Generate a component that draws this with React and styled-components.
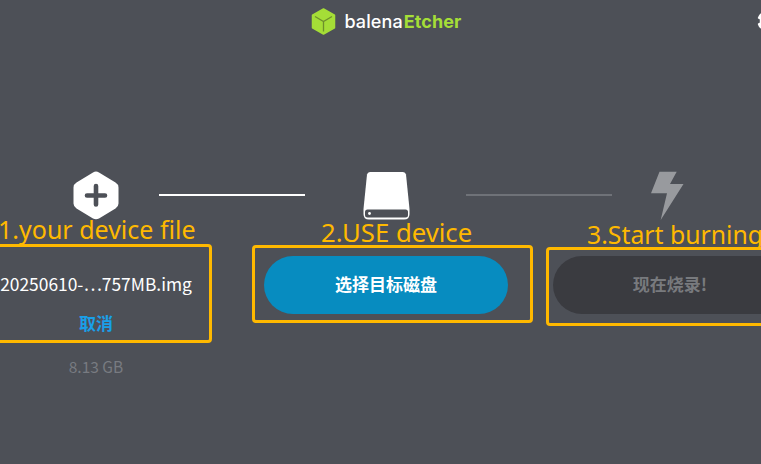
import React from "react";
import styled, { createGlobalStyle } from "styled-components";
import { FaCog } from "react-icons/fa";

const GlobalStyle = createGlobalStyle`
  html, body {
    margin: 0;
    padding: 0;
    background: #4d5057;
    overflow: hidden;
  }
`;

const Page = styled.div`
  position: relative;
  width: 761px;
  height: 464px;
  overflow: hidden;
  background: #4d5057;
  font-family: "Noto Sans CJK SC", "Noto Sans", sans-serif;
`;

const Header = styled.header`
  display: flex;
  justify-content: center;
  align-items: center;
  gap: 8px;
  height: 42px;
  padding-left: 12px;
`;

const BrandText = styled.div`
  font-family: "Inter", "Liberation Sans", sans-serif;
  font-size: 18px;
  font-weight: 500;
  letter-spacing: 0.1px;
  color: #fff;
  span {
    color: #a5de37;
    font-weight: 700;
    margin-left: 1px;
  }
`;

const SettingsIcon = styled.div`
  position: absolute;
  top: 10px;
  left: 757px;
  color: #fff;
  display: flex;
`;

const IconRow = styled.div`
  display: flex;
  align-items: center;
  height: 48px;
  margin-top: 129px;
  padding-left: 73px;
`;

const IconSlot = styled.div`
  display: flex;
  margin-left: ${(p) => p.$gap || 0}px;
`;

const Connector = styled.div`
  flex: none;
  width: 146px;
  height: 2px;
  margin-left: ${(p) => p.$gap}px;
  background: ${(p) => (p.$active ? "#fff" : "#6f7278")};
`;

const Steps = styled.div`
  display: flex;
  align-items: flex-start;
  margin-top: -3px;
`;

const Step = styled.section`
  display: flex;
  flex-direction: column;
  flex: none;
  width: ${(p) => p.$width}px;
  margin-left: ${(p) => p.$offset}px;
`;

const Caption = styled.div`
  font-family: "Noto Sans", sans-serif;
  font-size: ${(p) => p.$size}px;
  line-height: 29px;
  height: 29px;
  color: #ffb900;
  white-space: nowrap;
  padding-left: ${(p) => p.$indent}px;
  margin-top: ${(p) => p.$top || 0}px;
`;

const Outlined = styled.div`
  box-sizing: border-box;
  width: 100%;
  height: ${(p) => p.$height}px;
  margin-top: ${(p) => p.$top || 0}px;
  padding: ${(p) => p.$padTop}px 0 0 ${(p) => p.$padLeft || 0}px;
  border: 3px solid #ffb900;
  border-radius: 4px;
  display: flex;
  flex-direction: column;
  align-items: ${(p) => (p.$padLeft ? "flex-start" : "center")};
`;

const FileName = styled.div`
  font-size: 17.4px;
  line-height: 24px;
  color: #fff;
  white-space: nowrap;
`;

const CancelLink = styled.div`
  margin-top: 17px;
  font-size: 17px;
  font-weight: 700;
  line-height: 20px;
  color: #1a9fe8;
`;

const DriveSize = styled.div`
  margin-top: 13px;
  text-align: center;
  font-size: 15.5px;
  line-height: 20px;
  color: #787b81;
`;

const PillButton = styled.div`
  box-sizing: border-box;
  display: flex;
  align-items: center;
  justify-content: center;
  flex: none;
  width: 244px;
  height: 58px;
  padding: 0 ${(p) => (p.$disabled ? 10 : 0)}px 3px 0;
  border-radius: 29px;
  font-size: 17px;
  font-weight: 700;
  background: ${(p) => (p.$disabled ? "#3a3b40" : "#078cc0")};
  color: ${(p) => (p.$disabled ? "#787a7e" : "#fff")};
`;

const HexPlus = () => (
  <svg width="46" height="49" viewBox="0 0 46 49">
    <path
      d="M23 0.5 Q24.5 0.5 26 1.5 L42.5 11.5 Q45.5 13.3 45.5 16.5 L45.5 32.5 Q45.5 35.7 42.5 37.5 L26 47.5 Q23 49 20 47.5 L3.5 37.5 Q0.5 35.7 0.5 32.5 L0.5 16.5 Q0.5 13.3 3.5 11.5 L20 1.5 Q21.5 0.5 23 0.5 Z"
      fill="#fff"
    />
    <path d="M23 15 V33.5 M14 24.5 H32" stroke="#4d5057" strokeWidth="4.6" strokeLinecap="round" />
  </svg>
);

const DriveIcon = () => (
  <svg width="47" height="49" viewBox="0 0 47 49">
    <path
      d="M7 1 H40 Q42.5 1 43 3.5 L46.5 38 V43 Q46.5 48.5 41 48.5 H6 Q0.5 48.5 0.5 43 V38 L4 3.5 Q4.5 1 7 1 Z"
      fill="#fff"
    />
    <rect x="2" y="38.5" width="43" height="8" rx="2.5" fill="#4d5057" />
    <circle cx="6.5" cy="42.5" r="1.4" fill="#fff" />
  </svg>
);

const BoltIcon = () => (
  <svg width="33" height="49" viewBox="0 0 33 49">
    <path d="M8.5 0.7 H25.7 L19 13 H32.5 L9.7 49 L16 22.3 H0 Z" fill="#989a9e" />
  </svg>
);

const CubeLogo = () => (
  <svg width="25" height="27" viewBox="0 0 25 27">
    <path d="M12.5 1 L23.5 7.2 V19.8 L12.5 26 L1.5 19.8 V7.2 Z" fill="#a5de37" stroke="#a5de37" strokeWidth="1.5" strokeLinejoin="round" />
    <path d="M4 8.5 L12.5 13.5 L21 8.5 M12.5 13.5 V23.5" fill="none" stroke="#6d8f2c" strokeWidth="1.3" />
  </svg>
);

export default function App() {
  return (
    <Page>
      <GlobalStyle />
      <Header>
        <CubeLogo />
        <BrandText>
          balena<span>Etcher</span>
        </BrandText>
      </Header>
      <SettingsIcon>
        <FaCog size={22} />
      </SettingsIcon>

      <IconRow>
        <HexPlus />
        <Connector $gap={40} $active />
        <IconSlot $gap={58}>
          <DriveIcon />
        </IconSlot>
        <Connector $gap={56} />
        <IconSlot $gap={39}>
          <BoltIcon />
        </IconSlot>
      </IconRow>

      <Steps>
        <Step $width={232} $offset={-20}>
          <Caption $indent={18} $size={25} $top={-1}>1.your device file</Caption>
          <Outlined $height={99} $padTop={25}>
            <FileName>20250610-…757MB.img</FileName>
            <CancelLink>取消</CancelLink>
          </Outlined>
          <DriveSize>8.13 GB</DriveSize>
        </Step>
        <Step $width={281} $offset={40}>
          <Caption $indent={69} $size={25.7} $top={2}>2.USE device</Caption>
          <Outlined $height={78} $top={-2} $padTop={8} $padLeft={9}>
            <PillButton>选择目标磁盘</PillButton>
          </Outlined>
        </Step>
        <Step $width={260} $offset={13}>
          <Caption $indent={41} $size={24.8} $top={4}>3.Start burning</Caption>
          <Outlined $height={79} $top={-2} $padTop={6} $padLeft={4}>
            <PillButton $disabled>现在烧录!</PillButton>
          </Outlined>
        </Step>
      </Steps>
    </Page>
  );
}
